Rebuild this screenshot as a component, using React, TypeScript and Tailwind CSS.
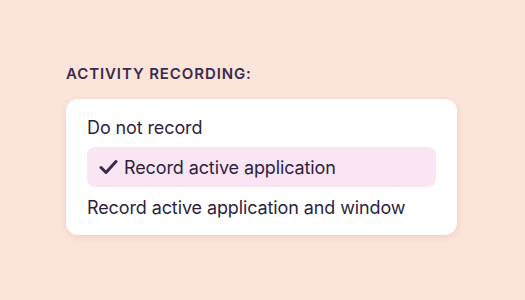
export default function App() {
  const items = [
    { label: 'Do not record', active: false },
    { label: 'Record active application', active: true },
    { label: 'Record active application and window', active: false },
  ];

  return (
    <div className="w-[525px] h-[300px] bg-[#fbe4da] pt-[66px] pl-[66px] font-['Inter',sans-serif] text-[#2e1f3f]">
      <div className="text-[15px] font-semibold tracking-[0.06em] leading-[15px] text-[#3a2a4b]">ACTIVITY RECORDING:</div>
      <div className="mt-[18px] w-[391px] rounded-xl bg-white px-[21px] py-[8px] shadow-[0_2px_6px_rgba(180,120,100,0.18)]">
        {items.map((item) => (
          <div
            key={item.label}
            className={`flex h-[40px] items-center text-[18px] tracking-[-0.006em] ${item.active ? 'rounded-lg bg-[#f9e5f4] pl-[12px]' : ''}`}
          >
            {item.active && (
              <svg width="19" height="16" viewBox="0 0 19 16" className="mr-[6px]">
                <path d="M2 8.5 L7 13.5 L17 2.5" fill="none" stroke="#3a2a4b" strokeWidth="3" strokeLinecap="round" strokeLinejoin="round" />
              </svg>
            )}
            {item.label}
          </div>
        ))}
      </div>
    </div>
  );
}
